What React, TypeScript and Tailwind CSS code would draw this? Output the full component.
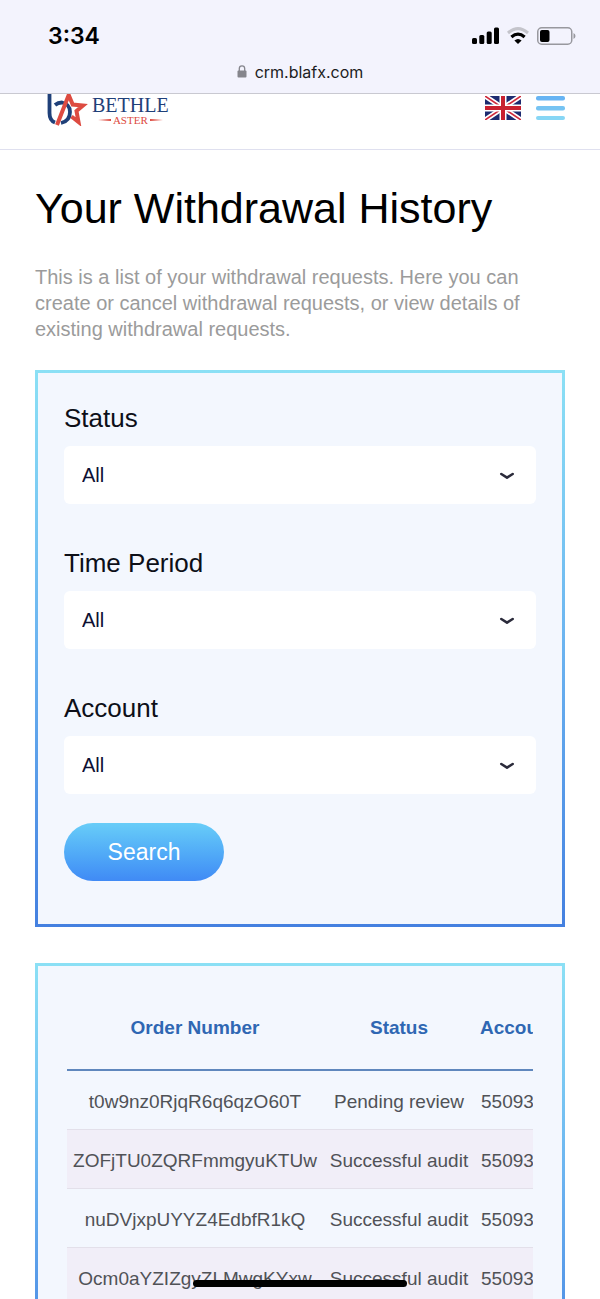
import React, { useState } from "react";

type Filter = {
  id: string;
  label: string;
  options: string[];
};

const filters: Filter[] = [
  { id: "status", label: "Status", options: ["All"] },
  { id: "period", label: "Time Period", options: ["All"] },
  { id: "account", label: "Account", options: ["All"] },
];

const orders = [
  { number: "t0w9nz0RjqR6q6qzO60T", status: "Pending review", account: "55093" },
  { number: "ZOFjTU0ZQRFmmgyuKTUw", status: "Successful audit", account: "55093" },
  { number: "nuDVjxpUYYZ4EdbfR1kQ", status: "Successful audit", account: "55093" },
  { number: "Ocm0aYZIZgyZLMwgKYxw", status: "Successful audit", account: "55093" },
];

const StatusBar = () => (
  <div className="shrink-0 bg-[#f3f3fd] border-b border-[#c9c9d1] font-['Inter',sans-serif]">
    <div className="flex items-center justify-between pl-12 pr-6 pt-5 h-[52px]">
      <span className="text-[23px] leading-8 font-semibold text-black">3:34</span>
      <div className="flex items-center gap-2">
        <svg width="27" height="18" viewBox="0 0 27 18" aria-hidden="true">
          <rect x="0" y="11" width="5" height="6" rx="1.5" />
          <rect x="7.3" y="8" width="5" height="9" rx="1.5" />
          <rect x="14.7" y="4.5" width="5" height="12.5" rx="1.5" />
          <rect x="22" y="0.5" width="5" height="16.5" rx="1.5" />
        </svg>
        <svg width="22" height="18" viewBox="0 0 22 18" fill="none" aria-hidden="true">
          <path d="M1 6Q11-2.800 21 6" stroke="#c4c4cb" strokeWidth="3" />
          <path d="M4.400 10Q11 4.200 17.600 10" stroke="#000" strokeWidth="3.2" />
          <path d="M7.400 13.600Q11 10.400 14.600 13.600L11 17Z" fill="#000" />
        </svg>
        <svg width="39" height="18" viewBox="0 0 39 18" fill="none" aria-hidden="true">
          <rect x="0.75" y="0.75" width="34" height="16.5" rx="4" stroke="#98989e" strokeWidth="1.5" />
          <rect x="3" y="3" width="9.5" height="12" rx="2" fill="#000" />
          <path d="M36.500 6v6q2-1 2-3t-2-3Z" fill="#98989e" />
        </svg>
      </div>
    </div>
    <div className="flex items-center justify-center gap-2 h-[41px] pb-0.5">
      <svg width="10" height="13" viewBox="0 0 10 13" fill="none" aria-hidden="true">
        <rect x="0.5" y="5.5" width="9" height="7" rx="1" fill="#85858c" />
        <path d="M2.300 6V3.500a2.700 2.700 0 0 1 5.400 0V6" stroke="#85858c" strokeWidth="1.3" />
      </svg>
      <span className="text-base text-[#1c1c22]">crm.blafx.com</span>
    </div>
  </div>
);

const Logo = () => (
  <a href="#home" aria-label="Bethle Aster" className="flex items-start gap-1">
    <svg width="42" height="32" viewBox="0 0 42 32" fill="none" aria-hidden="true">
      <path d="M3.500 0V19Q3.500 26.500 9 28.500" stroke="#1f4079" strokeWidth="3.8" />
      <path
        d="M9 11Q12 8.500 16 8.500Q24 10 24 18Q24 27 15 29"
        stroke="#1f4079"
        strokeWidth="3.8"
      />
      <path
        d="M11 31L22.700 1L26.700 10.500L37 11.500L30.500 17L32.500 28L25.500 22.500"
        stroke="#dd4b41"
        strokeWidth="4"
      />
    </svg>
    <span className="flex flex-col items-center font-['Liberation_Serif',serif]">
      <span className="text-[20px] leading-[22px] text-[#1f4079]">BETHLE</span>
      <span className="flex items-center gap-0.5 text-[11px] leading-2 text-[#dd4b41]">
        <svg width="13" height="2" aria-hidden="true">
          <path d="M0 1L13 0V2Z" fill="#dd4b41" />
        </svg>
        ASTER
        <svg width="13" height="2" aria-hidden="true">
          <path d="M13 1L0 0V2Z" fill="#dd4b41" />
        </svg>
      </span>
    </span>
  </a>
);

const Flag = () => (
  <svg width="36" height="24" viewBox="0 0 36 24" aria-hidden="true">
    <rect width="36" height="24" fill="#1d2b70" />
    <path d="M0 0L36 24M36 0L0 24" stroke="#fff" strokeWidth="5" />
    <path d="M0 0L36 24M36 0L0 24" stroke="#cf2a3c" strokeWidth="1.6" />
    <path d="M18 0V24M0 12H36" stroke="#fff" strokeWidth="7" />
    <path d="M18 0V24M0 12H36" stroke="#c8202f" strokeWidth="4" />
  </svg>
);

const SiteHeader = () => (
  <header className="flex items-start justify-between h-14 pl-[46px] pr-[35px] bg-white border-b border-[#dfe0ef]">
    <Logo />
    <div className="flex items-start gap-[15px] pt-0.5">
      <button type="button" aria-label="Language: English">
        <Flag />
      </button>
      <button type="button" aria-label="Open menu">
        <svg width="29" height="24" viewBox="0 0 29 24" aria-hidden="true">
          <rect y="0" width="29" height="4.5" rx="2" fill="#67b4f3" />
          <rect y="10" width="29" height="4.5" rx="2" fill="#76c3f2" />
          <rect y="20" width="29" height="4" rx="2" fill="#87d6f5" />
        </svg>
      </button>
    </div>
  </header>
);

const Panel = ({ children }: { children: React.ReactNode }) => (
  <section className="p-[3px] bg-linear-to-b from-[#8be0f5] via-[#6bb3f0] to-[#4480e0]">
    <div className="bg-[#f3f7fe]">{children}</div>
  </section>
);

const FilterSelect = ({ filter }: { filter: Filter }) => {
  const [value, setValue] = useState(filter.options[0]);

  return (
    <div className="flex flex-col gap-3">
      <label htmlFor={filter.id} className="text-[26px] leading-8 text-[#0d0f18]">
        {filter.label}
      </label>
      <div className="relative">
        <select
          id={filter.id}
          value={value}
          onChange={(e) => setValue(e.target.value)}
          className="block w-full h-[58px] px-[18px] appearance-none rounded-md bg-white text-[20px] text-[#0d1033]"
        >
          {filter.options.map((option) => (
            <option key={option}>{option}</option>
          ))}
        </select>
        <svg
          className="absolute right-5 top-6 pointer-events-none"
          width="18"
          height="12"
          viewBox="0 0 18 12"
          fill="none"
          aria-hidden="true"
        >
          <path
            d="M3.300 4L9 7.600L14.700 4"
            stroke="#2b2b3b"
            strokeWidth="2.6"
            strokeLinecap="round"
            strokeLinejoin="round"
          />
        </svg>
      </div>
    </div>
  );
};

const OrdersTable = () => (
  <div className="overflow-hidden">
    <table className="w-full table-fixed border-separate border-spacing-0 text-[19px] text-center whitespace-nowrap text-[#505257]">
      <colgroup>
        <col className="w-64" />
        <col className="w-[152px]" />
        <col />
      </colgroup>
      <thead>
        <tr className="h-[84px] text-[#2f67b3]">
          <th className="border-b-2 border-[#5f87bd]">Order Number</th>
          <th className="border-b-2 border-[#5f87bd]">Status</th>
          <th className="border-b-2 border-[#5f87bd] pl-[5px] text-left">Account</th>
        </tr>
      </thead>
      <tbody>
        {orders.map((order) => (
          <tr key={order.number} className="h-[59px] even:bg-[#f1eef8]">
            <td className="pt-1 border-b border-[#e3e0ea]">{order.number}</td>
            <td className="pt-1 border-b border-[#e3e0ea]">{order.status}</td>
            <td className="pt-1 border-b border-[#e3e0ea] pl-1.5 text-left">{order.account}</td>
          </tr>
        ))}
      </tbody>
    </table>
  </div>
);

const App = () => {
  return (
    <div className="relative h-screen flex flex-col overflow-hidden bg-white font-['Liberation_Sans',Arial,sans-serif]">
      <StatusBar />
      <div className="flex-1 min-h-0 overflow-hidden">
        <SiteHeader />
        <main className="px-[35px] pt-8">
          <h1 className="text-[43px] leading-[52px] text-black">Your Withdrawal History</h1>
          <p className="mt-[30px] text-[20px] leading-[26px] text-[#9b9b9b]">
            This is a list of your withdrawal requests. Here you can create or
            cancel withdrawal requests, or view details of existing withdrawal
            requests.
          </p>
          <div className="mt-7 flex flex-col gap-9">
            <Panel>
              <form
                className="px-[26px] pt-[29px] pb-[43px]"
                onSubmit={(e) => e.preventDefault()}
              >
                <div className="flex flex-col gap-[43px]">
                  {filters.map((filter) => (
                    <FilterSelect key={filter.id} filter={filter} />
                  ))}
                </div>
                <button
                  type="submit"
                  className="mt-[29px] w-40 h-[58px] rounded-full bg-linear-to-b from-[#68cdf8] to-[#408af5] text-[23px] text-white"
                >
                  Search
                </button>
              </form>
            </Panel>
            <Panel>
              <div className="px-[29px] pt-[21px] pb-20">
                <OrdersTable />
              </div>
            </Panel>
          </div>
        </main>
      </div>
      <div className="absolute bottom-3 left-1/2 -translate-x-1/2 w-[214px] h-[7px] rounded-full bg-black" />
    </div>
  );
};

export default App;
